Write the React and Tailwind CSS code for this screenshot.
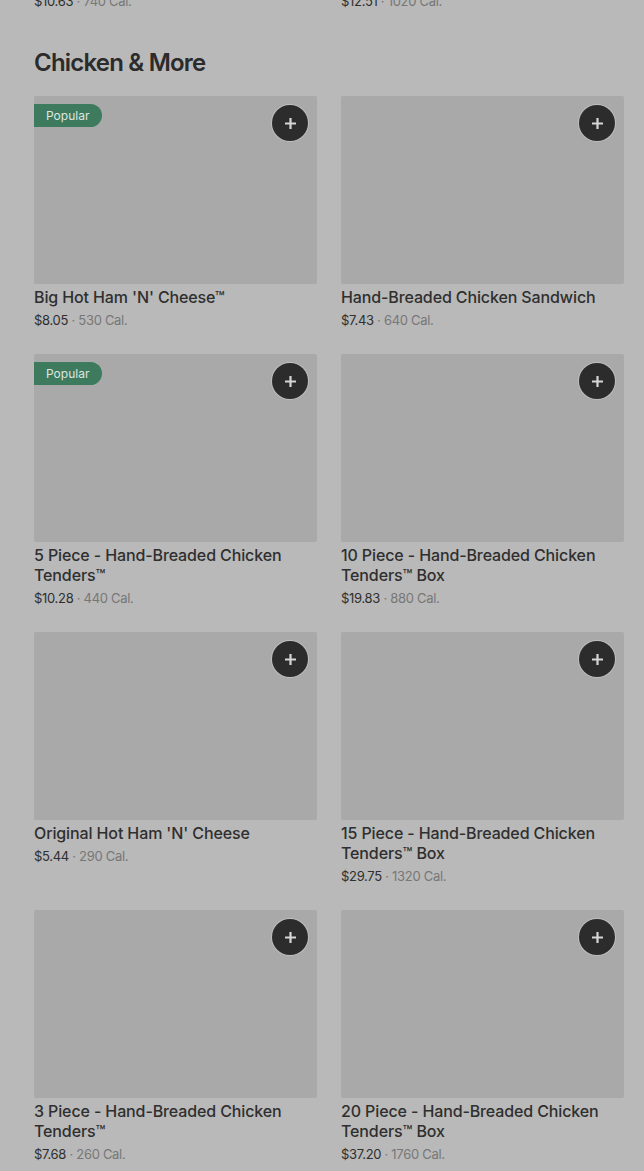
const items = [
  { name: "Big Hot Ham 'N' Cheese™", price: "$8.05", cal: "530 Cal.", popular: true },
  { name: "Hand-Breaded Chicken Sandwich", price: "$7.43", cal: "640 Cal." },
  { name: "5 Piece - Hand-Breaded Chicken Tenders™", price: "$10.28", cal: "440 Cal.", popular: true },
  { name: "10 Piece - Hand-Breaded Chicken Tenders™ Box", price: "$19.83", cal: "880 Cal." },
  { name: "Original Hot Ham 'N' Cheese", price: "$5.44", cal: "290 Cal." },
  { name: "15 Piece - Hand-Breaded Chicken Tenders™ Box", price: "$29.75", cal: "1320 Cal." },
  { name: "3 Piece - Hand-Breaded Chicken Tenders™", price: "$7.68", cal: "260 Cal." },
  { name: "20 Piece - Hand-Breaded Chicken Tenders™ Box", price: "$37.20", cal: "1760 Cal." },
];

const PriceLine = ({ price, cal }) => (
  <p className="mt-[3px] text-[13px] leading-[20px] tracking-[-0.3px]">
    <span className="text-[#2f2f2f]">{price}</span>
    <span className="text-[#777777]"> · {cal}</span>
  </p>
);

const ItemCard = ({ item }) => (
  <div>
    <div className="relative h-[188px] rounded-[2px] bg-[#a9a9a9]">
      {item.popular && (
        <span className="absolute left-0 top-[8px] rounded-r-full bg-[#3e7b5e] pl-[12px] pr-[13px] text-[12px] leading-[23px] text-[#dde6e1]">
          Popular
        </span>
      )}
      <button className="absolute right-[9px] top-[9px] flex h-[36px] w-[36px] items-center justify-center rounded-full bg-[#2c2c2c] shadow-[0_0_0_1px_rgba(255,255,255,0.25)]">
        <svg width="13" height="13" viewBox="0 0 13 13">
          <path d="M6.5 1v11M1 6.5h11" stroke="#d6d6d6" strokeWidth="2.2" />
        </svg>
      </button>
    </div>
    <h3 className="mt-[3px] text-[16px] font-medium leading-[20px] tracking-[-0.12px] text-[#2f2f2f]">{item.name}</h3>
    <PriceLine price={item.price} cal={item.cal} />
  </div>
);

export default function App() {
  return (
    <div
      className="min-h-[1171px] overflow-hidden bg-[#b9b9b9] pl-[34px] pr-[20px]"
      style={{ fontFamily: "Inter, 'Noto Sans', sans-serif" }}
    >
      <div className="-mt-[12px] grid grid-cols-2 gap-x-[24px]">
        <PriceLine price="$10.63" cal="740 Cal." />
        <PriceLine price="$12.51" cal="1020 Cal." />
      </div>
      <h2 className="mt-[36px] text-[24px] font-semibold leading-[32px] tracking-[-0.8px] text-[#2b2b2b]">
        Chicken &amp; More
      </h2>
      <div className="mt-[17px] grid grid-cols-2 gap-x-[24px] gap-y-[24px]">
        {items.map((item) => (
          <ItemCard key={item.name} item={item} />
        ))}
      </div>
    </div>
  );
}
